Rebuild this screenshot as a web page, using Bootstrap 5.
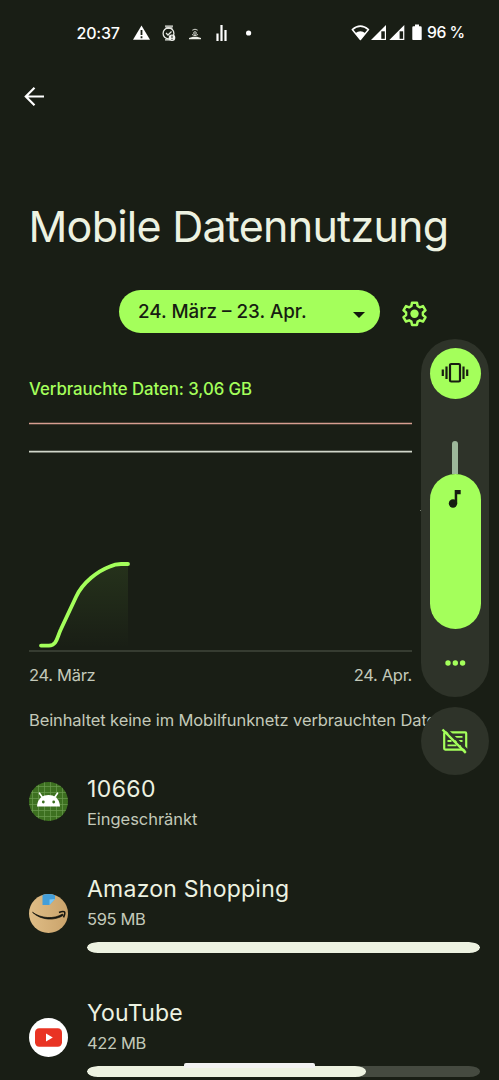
<!DOCTYPE html>
<html lang="de" data-bs-theme="dark">
<head>
<meta charset="utf-8">
<meta name="viewport" content="width=device-width, initial-scale=1">
<title>Mobile Datennutzung</title>
<link href="https://cdn.jsdelivr.net/npm/bootstrap@5.3.0/dist/css/bootstrap.min.css" rel="stylesheet">
<style>
  :root { --lime: #a4ff5b; --cream: #edf2e1; --muted: #c3c9b9; --panel: #2e3329; }
  body { background: #191e15; color: var(--cream); font-family: Inter, Roboto, sans-serif; }
  svg { display: block; flex: none; }
  .screen { width: 499px; height: 1080px; }
  .status { height: 65px; padding: 0 34px 0 76.5px; font-size: 16px; font-weight: 500; color: #fff; }
  .status .clock { width: 48.5px; letter-spacing: -.2px; }
  .status .percent { letter-spacing: -.5px; font-size: 15.7px; margin-left: 3px; white-space: nowrap; width: 38px; }
  .toolbar { height: 64px; padding-left: 22px; }
  h1 { margin: 69px 0 0; padding-left: 28.5px; font-size: 43px; line-height: 56px; font-weight: 400; letter-spacing: -.75px; white-space: nowrap; color: var(--cream); }
  .filter { margin: 36px 0 0 119px; height: 44px; gap: 21px; }
  .cycle { width: 261px; height: 43px; padding: 1px 14px 0 19px; font-size: 18.8px; font-weight: 450; letter-spacing: 0; color: #171d11; background: var(--lime); border: 0; }
  .cycle:hover { background: var(--lime); color: #171d11; }
  .usage { margin: 43px 0 0 29px; width: 383px; }
  .used { font-size: 16.8px; line-height: 24px; font-weight: 500; letter-spacing: -.06px; color: var(--lime); }
  .axis, .note { font-size: 16.5px; line-height: 24px; color: var(--muted); }
  .axis { letter-spacing: -.3px; }
  .note { margin: 21px 0 0 29px; letter-spacing: -.11px; white-space: nowrap; }
  .apps { margin: 42px 0 0 29px; width: 451px; }
  .app-row { height: 124px; gap: 19px; }
  .app-row.plain { height: 100px; }
  .app-row > svg { margin-top: 20px; }
  .app-row.plain > svg { margin-top: 8px; }
  .app-name { font-size: 23px; line-height: 30px; letter-spacing: .24px; }
  .app-info { margin-top: 3px; font-size: 16.5px; line-height: 25px; letter-spacing: -.35px; color: var(--muted); }
  .app-row.plain .app-name { letter-spacing: .4px; }
  .app-row.plain .app-info { letter-spacing: -.05px; }
  .progress { height: 10.5px; margin-top: 10px; background: #454a40; border-radius: 11px / 5.2px; }
  .progress-bar { background: var(--cream); border-radius: 11px / 5.2px; }
  .volume { top: 339px; right: 10px; width: 68px; }
  .volume-panel { height: 358px; border-radius: 34px; background: var(--panel); padding-top: 8.5px; }
  .ringer { width: 51px; height: 51px; background: var(--lime); }
  .track { width: 5.5px; height: 32.5px; margin-top: 42.5px; border-radius: 3px 3px 0 0; background: #9db79a; }
  .level { width: 51px; height: 155.5px; border-radius: 25.5px; background: var(--lime); padding-top: 15px; }
  .dots { margin-top: 30px; }
  .captions { width: 68px; height: 68px; margin-top: 9.5px; background: var(--panel); }
  .tick { top: 510px; left: 420px; width: 2px; height: 1px; background: #777d70; }
  .handle { left: 184px; bottom: 12px; width: 131px; height: 5px; border-radius: 2px 2px 0 0; background: #f2f2f2; }
</style>
</head>
<body>
<main class="screen position-relative overflow-hidden">
  <header class="status d-flex align-items-center">
    <span class="clock">20:37</span>
    <svg class="ms-1" width="140" height="24" viewBox="129 21 140 24">
      <path d="M141.500 25.400 150 39.800H133z" fill="#fff"/>
      <path d="M141.500 30v5M141.500 36.300v2" stroke="#191e15" stroke-width="1.800"/>
      <g fill="none" stroke="#e7e9e3" stroke-width="1.300">
        <path d="M165 26.200h8M165.500 28h7M165 39.800h5"/>
        <circle cx="168.500" cy="33.400" r="5.400"/>
        <path d="m166 33 2 2 3.500-3.500"/>
      </g>
      <circle cx="172" cy="37.700" r="3.300" fill="#f1f2ee"/>
      <path d="M172 35.700v2.500M172 39v1" stroke="#191e15" stroke-width="1"/>
      <path d="M189 39.300v-1.200l4-1.300h4l4 1.300v1.200z" fill="#eceee8"/>
      <g fill="none" stroke="#cdd0c8" stroke-width="1">
        <circle cx="195" cy="33" r="1.300"/><path d="M192.300 30.200q2.700-2 5.400 0M192 34.500q3 2.400 6 0"/>
      </g>
      <path d="M217.500 41v-7.500M221.500 41V25M225.500 41v-11" stroke="#fff" stroke-width="2.200"/>
      <circle cx="248.600" cy="33" r="2.600" fill="#fff"/>
    </svg>
    <svg class="ms-auto" width="73" height="22" viewBox="351 22 73 22">
      <path d="M352.300 29.600q8-7 16.200 0L360.400 39.400z" fill="none" stroke="#fff" stroke-width="1.500" stroke-linejoin="round"/>
      <path d="M355.300 33.200q5-3.800 10.200 0l-5.100 6.300z" fill="#fff"/>
      <path d="M386 25v15h-15z" fill="#fff"/><path d="M384.800 31.300v7.500h-3.500v-7.500z" fill="#191e15"/>
      <path d="M404.300 25v15h-15z" fill="#fff"/><path d="M403.100 31.300v7.500h-3.500v-7.500z" fill="#191e15"/>
      <path d="M415 24.500h4v1.700h1.500q1.200 0 1.200 1.200v11.500q0 1.200-1.200 1.200h-7q-1.200 0-1.200-1.200V27.400q0-1.200 1.200-1.200h1.500z" fill="#fff"/>
    </svg>
    <span class="percent">96 %</span>
  </header>

  <nav class="toolbar d-flex align-items-center" aria-label="Zurück">
    <svg width="24" height="24" viewBox="0 0 24 24" fill="none" stroke="#fff" stroke-width="2.200"><path d="M22 11.500H4M12.500 2.800 3.800 11.500l8.700 8.700"/></svg>
  </nav>

  <h1>Mobile Datennutzung</h1>

  <div class="filter d-flex align-items-start">
    <button class="cycle btn rounded-pill d-flex align-items-center justify-content-between" type="button">
      <span>24. März – 23. Apr.</span>
      <svg class="mt-2" width="14" height="8" viewBox="0 0 14 8"><path d="M1 0h12L7 6z" fill="#12180d"/></svg>
    </button>
    <svg class="mt-2" width="27" height="32" viewBox="400.500 298 27 32" fill="none" stroke="#a4ff5b" stroke-width="2.500" stroke-linejoin="round">
      <path d="M411.500 302.700h5l.6 3.300 2.200 1.300 3.200-1.200 2.500 4.200-2.600 2.200v2.600l2.600 2.200-2.500 4.200-3.200-1.200-2.200 1.300-.6 3.300h-5l-.6-3.300-2.200-1.300-3.200 1.200-2.500-4.200 2.600-2.200v-2.600l-2.600-2.200 2.500-4.200 3.200 1.200 2.200-1.300z"/>
      <circle cx="414" cy="313.800" r="4.200" fill="#a4ff5b" stroke="none"/>
    </svg>
  </div>

  <section class="usage">
    <div class="used">Verbrauchte Daten: 3,06 GB</div>
    <svg width="383" height="262" viewBox="29 401 383 262">
      <defs><linearGradient id="area" x2="0" y2="1"><stop stop-color="#a4ff5b" stop-opacity=".09"/><stop offset="1" stop-color="#a4ff5b" stop-opacity="0"/></linearGradient></defs>
      <path d="M29 423.500h383" stroke="#d79e91" stroke-width="1.700"/>
      <path d="M29 451.600h383" stroke="#d1d6ca" stroke-width="1.700"/>
      <path d="M29 651h383" stroke="#41473b" stroke-width="1.500"/>
      <path d="M41 645.600h8C57 645.600 57 637 61 629L76 597C83 582 98 571 110 566.500Q115 564 121 564h7v84H41z" fill="url(#area)"/>
      <path d="M41 645.600h8C57 645.600 57 637 61 629L76 597C83 582 98 571 110 566.500Q115 564 121 564h7" fill="none" stroke="#a4ff5b" stroke-width="3.800" stroke-linecap="round"/>
    </svg>
    <div class="axis d-flex justify-content-between"><span>24. März</span><span>24. Apr.</span></div>
  </section>

  <p class="note mb-0">Beinhaltet keine im Mobilfunknetz verbrauchten Daten</p>

  <section class="apps">
    <div class="app-row plain d-flex align-items-start">
      <svg width="39" height="39" viewBox="0 0 39 39">
        <clipPath id="round"><circle cx="19.500" cy="19.500" r="19.500"/></clipPath>
        <g clip-path="url(#round)">
          <path d="M0 0h39v39H0z" fill="#3d7020"/>
          <path d="M3.500 0v39M9.500 0v39M15.500 0v39M21.500 0v39M27.500 0v39M33.500 0v39M0 4.500h39M0 10.500h39M0 16.500h39M0 22.500h39M0 28.500h39M0 34.500h39" stroke="#6b9b50" stroke-width=".7"/>
        </g>
        <path d="M8 24.500C8.500 16 14 13 19.500 13S30.500 16 31 24.500z" fill="#fff"/>
        <path d="m13.500 15.500-3-4.300M25.500 15.500l3-4.300" stroke="#fff" stroke-width="1.600" stroke-linecap="round"/>
        <circle cx="14.300" cy="20" r="1.400" fill="#3d7020"/><circle cx="24.700" cy="20" r="1.400" fill="#3d7020"/>
      </svg>
      <div class="flex-grow-1">
        <div class="app-name">10660</div>
        <div class="app-info">Eingeschränkt</div>
      </div>
    </div>
    <div class="app-row d-flex align-items-start">
      <svg width="39" height="39" viewBox="0 0 39 39">
        <linearGradient id="box"><stop stop-color="#dfbd86"/><stop offset="1" stop-color="#caa36b"/></linearGradient>
        <circle cx="19.500" cy="19.500" r="19.500" fill="url(#box)"/>
        <path d="M13.500 1Q19.500-1 26 1.200V5l-5.500 6h-7z" fill="#439ed9"/>
        <path d="M20.500 11V5.500L26 5z" fill="#79c6f4"/>
        <path d="M3.500 18.300C12 24.500 25 25.500 33.500 20l.8 1.300C26 27 12 26.500 3.500 18.300z" fill="#15150f" stroke="#15150f" stroke-width=".7"/>
        <path d="M30 18.500q4-1.600 5.500-.6 1 1.500-1 5.500" fill="none" stroke="#15150f" stroke-width="1.500"/>
      </svg>
      <div class="flex-grow-1">
        <div class="app-name">Amazon Shopping</div>
        <div class="app-info">595 MB</div>
        <div class="progress"><div class="progress-bar" style="width:100%"></div></div>
      </div>
    </div>
    <div class="app-row d-flex align-items-start">
      <svg width="39" height="39" viewBox="0 0 39 39">
        <circle cx="19.500" cy="19.500" r="19.500" fill="#fff"/>
        <rect x="6" y="10.200" width="27" height="18.600" rx="4.200" fill="#e93323"/>
        <path d="m17 15.500 6.800 4-6.800 4z" fill="#fff"/>
      </svg>
      <div class="flex-grow-1">
        <div class="app-name">YouTube</div>
        <div class="app-info">422 MB</div>
        <div class="progress"><div class="progress-bar" style="width:70.9%"></div></div>
      </div>
    </div>
  </section>

  <i class="tick position-absolute"></i>
  <aside class="volume position-absolute">
    <div class="volume-panel d-flex flex-column align-items-center">
      <div class="ringer rounded-circle d-flex align-items-center justify-content-center">
        <svg width="28" height="22" viewBox="0 0 28 22" fill="none" stroke="#171d11" stroke-width="2.200"><rect x="9" y="2" width="10" height="17.500" rx="1.200"/><path d="M5.500 4.500v12.500M22.500 4.500v12.500M1.800 7.500v6.500M26.200 7.500v6.500"/></svg>
      </div>
      <div class="track"></div>
      <div class="level d-flex justify-content-center">
        <svg width="14" height="20" viewBox="0 0 14 20" fill="#171d11"><circle cx="5" cy="14.500" r="4.200"/><path d="M6.700 1h6v4.300H9.200v9.200H6.700z"/></svg>
      </div>
      <svg class="dots" width="22" height="8" viewBox="0 0 22 8" fill="#a4ff5b"><circle cx="4" cy="4" r="2.700"/><circle cx="11.300" cy="4" r="2.700"/><circle cx="18.600" cy="4" r="2.700"/></svg>
    </div>
    <div class="captions rounded-circle d-flex align-items-center justify-content-center">
      <svg width="28" height="28" viewBox="0 0 28 28" fill="none" stroke="#a4ff5b" stroke-width="2.200">
        <rect x="3.200" y="5.400" width="22" height="17.200" rx="1"/>
        <path d="M6.500 14h4M6.500 18.300h9M14 14h7.500M19 18.300h2.500M12.500 9.800h9" stroke-width="1.800"/>
        <path d="m3.800.8 22.500 22.500" stroke="#2e3329" stroke-width="2.500"/>
        <path d="m1.500 2.500 23.300 23.300" stroke-width="2.400"/>
      </svg>
    </div>
  </aside>
  <div class="handle position-absolute"></div>
</main>
<script src="https://cdn.jsdelivr.net/npm/bootstrap@5.3.0/dist/js/bootstrap.bundle.min.js"></script>
</body>
</html>
